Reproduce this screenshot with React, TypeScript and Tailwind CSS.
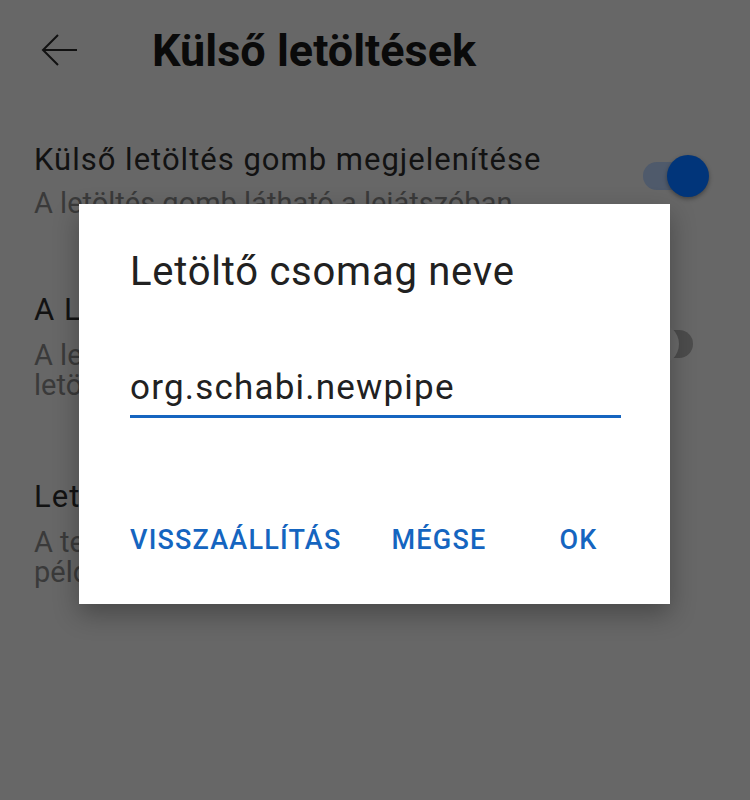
import React from 'react';

function Toggle({ on }: { on: boolean }) {
  if (on) {
    return (
      <div className="relative mt-[14px] h-[42px] w-[68px] shrink-0">
        <div className="absolute left-[2px] top-[7px] h-[28px] w-[58px] rounded-full bg-[#4f5a6b]" />
        <div className="absolute right-0 top-0 h-[42px] w-[42px] rounded-full bg-[#01357a] shadow-[0_2px_4px_rgba(0,0,0,0.35)]" />
      </div>
    );
  }
  return (
    <div className="relative mt-[32px] h-[42px] w-[68px] shrink-0">
      <div className="absolute left-0 top-[7px] h-[28px] w-[52px] rounded-full bg-[#4c4c4c]" />
      <div className="absolute -left-[4px] top-0 h-[42px] w-[42px] rounded-full bg-[#6a6a6a]" />
    </div>
  );
}

type Row = { title: string; lines: string[]; toggle?: boolean; top: string; gap: string };

const rows: Row[] = [
  { title: 'Külső letöltés gomb megjelenítése', lines: ['A letöltés gomb látható a lejátszóban'], toggle: true, top: 'mt-[41px]', gap: 'mt-[9px]' },
  { title: 'A Letöltő alkalmazás használata', lines: ['A letöltés gomb megnyomásakor a külső', 'letöltő alkalmazás indul el'], toggle: false, top: 'mt-[73px]', gap: 'mt-[11px]' },
  { title: 'Letöltő csomag neve', lines: ['A telepített letöltő alkalmazás csomagneve,', 'például org.schabi.newpipe'], top: 'mt-[78px]', gap: 'mt-[11px]' },
];

export default function App() {
  return (
    <div className="relative h-[800px] w-[750px] overflow-hidden bg-[#676767] font-['Roboto',sans-serif]">
      <header className="flex h-[100px] items-center">
        <svg className="ml-[41px] h-[32px] w-[36px]" viewBox="0 0 36 32" fill="none" stroke="#111" strokeWidth="2">
          <path d="M36 16H2M17 1L2 16l15 15" />
        </svg>
        <h1 className="ml-[75px] text-[45px] font-bold leading-none text-[#0a0a0a]">Külső letöltések</h1>
      </header>

      <div className="flex flex-col pl-[34px] pr-[41px]">
        {rows.map((r, i) => (
          <div key={i} className={`flex items-start ${r.top}`}>
            <div className="flex-1">
              <div className="text-[31px] leading-[38px] tracking-[1px] text-[#121212]">{r.title}</div>
              <div className={r.gap}>
                {r.lines.map((l) => (
                  <div key={l} className="text-[29px] leading-[30px] text-[#3a3a3a]">{l}</div>
                ))}
              </div>
            </div>
            {r.toggle !== undefined && <Toggle on={r.toggle} />}
          </div>
        ))}
      </div>

      <div className="absolute left-[79px] top-[204px] flex h-[400px] w-[591px] flex-col bg-white pl-[51px] pr-[49px] shadow-[0_10px_24px_rgba(0,0,0,0.3)]">
        <h2 className="mt-[44px] text-[40px] leading-[48px] tracking-[0.75px] text-[#212121]">Letöltő csomag neve</h2>
        <div className="mt-[71px] border-b-[3px] border-[#1565c0] pb-[6px] text-[35px] leading-[42px] tracking-[1.2px] text-[#212121]">
          org.schabi.newpipe
        </div>
        <div className="mt-[109px] flex items-center text-[27px] font-medium leading-none tracking-[1.2px] text-[#1565c0]">
          <span>VISSZAÁLLÍTÁS</span>
          <span className="ml-[50px]">MÉGSE</span>
          <span className="ml-[73px]">OK</span>
        </div>
      </div>
    </div>
  );
}
